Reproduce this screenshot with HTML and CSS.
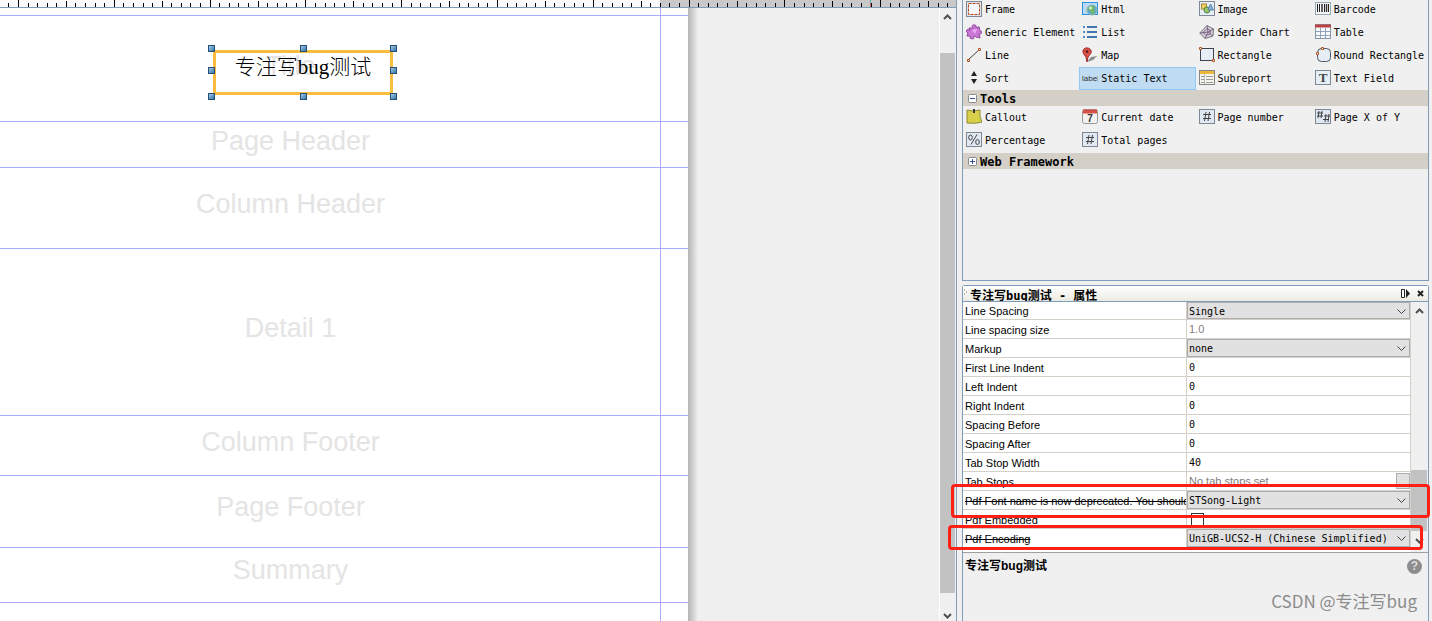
FILE: index.html
```html
<!DOCTYPE html>
<html lang="zh-CN">
<head>
<meta charset="utf-8">
<title>Report Designer</title>
<link rel="stylesheet" href="styles.css">
</head>
<body>
<main class="app">
  <section class="designer">
    <svg class="ruler" aria-hidden="true">
      <rect x="660" width="100%" height="7" fill="#c8c8c8"/>
      <g stroke="#000" shape-rendering="crispEdges">
        <line x1="8.42" x2="955" y1="5" y2="5" stroke-width="4" stroke-dasharray="1 8.58"/>
        <line x1="65.9" x2="955" y1="4" y2="4" stroke-width="6" stroke-dasharray="1 94.8"/>
        <line x1="18" x2="955" y1="3.5" y2="3.5" stroke-width="7" stroke-dasharray="1 94.8"/>
      </g>
      <rect x="870" y="0" width="1" height="3" fill="#5fb0a8"/>
      <rect x="870" y="3" width="1" height="4" fill="#d06a6a"/>
    </svg>
    <div class="workspace">
      <div class="page">
        <div class="band band-margin"></div>
        <div class="band band-title">Title
          <div class="element">
            <span class="element-text">专注写bug测试</span>
            <i class="handle top left"></i><i class="handle top center"></i><i class="handle top right"></i>
            <i class="handle middle left"></i><i class="handle middle right"></i>
            <i class="handle bottom left"></i><i class="handle bottom center"></i><i class="handle bottom right"></i>
          </div>
        </div>
        <div class="band band-page-header">Page Header</div>
        <div class="band band-column-header">Column Header</div>
        <div class="band band-detail">Detail 1</div>
        <div class="band band-column-footer">Column Footer</div>
        <div class="band band-page-footer">Page Footer</div>
        <div class="band band-summary">Summary</div>
      </div>
      <div class="shadow"></div>
      <div class="scrollbar canvas-scroll">
        <svg width="9" height="6" viewBox="0 0 9 6"><path d="M1 5 4.500 1.500 8 5" fill="none" stroke="#505050" stroke-width="2"/></svg>
        <div class="thumb"></div>
        <svg width="9" height="6" viewBox="0 0 9 6"><path d="M1 1 4.500 4.500 8 1" fill="none" stroke="#505050" stroke-width="2"/></svg>
      </div>
    </div>
  </section>

  <aside class="side">
    <section class="palette">
      <div class="items">
        <button class="item"><svg class="icon" viewBox="0 0 16 16"><rect x=".5" y=".5" width="15" height="15" fill="#dfe6ee" stroke="#7d8894"/><rect x="2.500" y="2.500" width="11" height="11" fill="#f4f6fa" stroke="#b8481c" stroke-dasharray="3 1"/></svg>Frame</button>
        <button class="item"><svg class="icon" viewBox="0 0 16 16"><rect x=".5" y="1.500" width="15" height="12" fill="#b9d9f5" stroke="#2d8fe0"/><circle cx="10" cy="9" r="5" fill="#5fa9d0" stroke="#8fb9a0"/><path d="M6 8q1-3 5-3l2 2-2 1 2 2-2 3q-2-1-2-3-2 0-3-2" fill="#74ba58"/><circle cx="8.500" cy="7" r="1.500" fill="#d8f2c8"/></svg>Html</button>
        <button class="item"><svg class="icon" viewBox="0 0 16 16"><rect x=".5" y=".5" width="15" height="14" fill="#e6eef7" stroke="#7d8894"/><rect x="2.500" y="3" width="5" height="5" fill="#f2cf60" stroke="#a6882d"/><circle cx="8" cy="9" r="3" fill="#9cc56c" stroke="#4d8443"/><path d="m11.500 3 3 6H9z" fill="#8cb5da" stroke="#5b82aa"/></svg>Image</button>
        <button class="item"><svg class="icon" viewBox="0 0 16 16"><rect x=".5" y="1.500" width="15" height="12" fill="#f5f7f8" stroke="#94aab0"/><path d="M2.500 3v8M4.500 3v8M9.500 3v8M13.500 3v8" stroke="#222"/><path d="M7 3v8M11.500 3v8" stroke="#333" stroke-width="1.500"/></svg>Barcode</button>
        <button class="item"><svg class="icon" viewBox="0 0 16 16"><path d="M7 4Q5 1 8 .800q3 0 2 3l3-1 1 4q2 0 1.500 2T13 10l1 4-4-1q-1-2-2-.5.500 2.500-2 2.500t-2-3L1 12l1-3Q-.5 8 .800 6T4 7L3 4z" fill="#cb78d7" stroke="#8f4b9c"/><path d="m6 6 5-1-2 5z" fill="#e7adee"/></svg>Generic Element</button>
        <button class="item"><svg class="icon" viewBox="0 0 16 16"><path d="M5 3h10M5 8h10M5 13h10" stroke="#3f78ae" stroke-width="2"/><path d="M1 3h2M1 8h2M1 13h2" stroke="#4a8fd0" stroke-width="2"/></svg>List</button>
        <button class="item"><svg class="icon" viewBox="0 0 16 16"><path d="M8 1.500 14.500 5 14 12 6 14.500.8 9z" fill="#d9cfdf" stroke="#77727c"/><path d="M8 1.500 9 8l5.500-3M9 8l5 4M9 8l-3 6.500M9 8 .8 9M8 4.500 11.500 6.500 11 10 7 11.500 4 8.500z" fill="none" stroke="#7a6682"/></svg>Spider Chart</button>
        <button class="item"><svg class="icon" viewBox="0 0 16 16"><rect x=".5" y=".5" width="15" height="14" fill="#f7f9fb" stroke="#8796a5"/><path d="M1 7.500h14M1 11.500h14M5.500 4v10M10.500 4v10" stroke="#91a5b9"/><path d="M0 2h16" stroke="#ba4242" stroke-width="3"/></svg>Table</button>
        <button class="item"><svg class="icon" viewBox="0 0 16 16"><path d="M3 12 13 3" stroke="#444"/><path d="M1.500 12.500h2v2h-2zM12.500 1.500h2v2h-2z" fill="#fff" stroke="#b6511d"/></svg>Line</button>
        <button class="item"><svg class="icon" viewBox="0 0 16 16"><path d="m5 15 4-5 6-1-4 4z" fill="#8b8b8b"/><path d="M5 15 4 10Q0 6 1 3q2-3 5-2 4 1 3 5L6 10z" fill="#df5148" stroke="#9c302c"/><circle cx="5" cy="4.500" r="1.500" fill="#602522"/></svg>Map</button>
        <button class="item"><svg class="icon" viewBox="0 0 16 16"><rect x="1.500" y="1.500" width="13" height="12" fill="#e7edf4" stroke="#3b4450"/><path d="M.5.500h2v2h-2zM13.500 12.500h2v2h-2z" fill="#fff" stroke="#b6511d"/></svg>Rectangle</button>
        <button class="item"><svg class="icon" viewBox="0 0 16 16"><rect x="2.500" y="1.500" width="13" height="13" rx="4" fill="#e7edf4" stroke="#4b5460"/><path d="M6.500.5h2v2h-2zM1.500 5.500h2v2h-2z" fill="#fff" stroke="#b6511d"/></svg>Round Rectangle</button>
        <button class="item"><svg class="icon" viewBox="0 0 16 16"><path d="M8 1 11 6H5zM8 14l3-5H5z" fill="#222"/></svg>Sort</button>
        <button class="item selected"><svg class="icon" viewBox="0 0 16 16"><text x="0" y="11" class="icon-label">label</text></svg>Static Text</button>
        <button class="item"><svg class="icon" viewBox="0 0 16 16"><rect x=".5" y=".5" width="15" height="14" fill="#f5f4ed" stroke="#868686"/><path d="M1 2.500h14" stroke="#eab93c" stroke-width="3"/><path d="M2 6.500h3M2 9.500h3M2 12.500h3M7 6.500h7M7 9.500h7M7 12.500h7" stroke="#989898"/><path d="M5.500 4v10" stroke="#b8b8b8"/></svg>Subreport</button>
        <button class="item"><svg class="icon" viewBox="0 0 16 16"><rect x=".5" y=".5" width="15" height="14" fill="#e6eef6" stroke="#7d8894"/><text x="8" y="12" class="icon-serif">T</text></svg>Text Field</button>
      </div>
      <button class="group"><svg width="9" height="9" viewBox="0 0 9 9"><rect x=".5" y=".5" width="8" height="8" rx="1" fill="#fff" stroke="#8a8a8a"/><path d="M2 4.500h5" stroke="#3b4fa0"/></svg>Tools</button>
      <div class="items">
        <button class="item"><svg class="icon" viewBox="0 0 16 16"><path d="M1 1q6 2 13 0-1 7 2 12-6 2-15 1z" fill="#d8d04a" stroke="#8f8b35"/><path d="M8 0v4" stroke="#333" stroke-width="2"/></svg>Callout</button>
        <button class="item"><svg class="icon" viewBox="0 0 16 16"><rect x=".5" y=".5" width="15" height="14" rx="2" fill="#f2f2f2" stroke="#999"/><path d="M1 2.500h14" stroke="#d6504b" stroke-width="4"/><text x="8" y="13" class="icon-num">7</text></svg>Current date</button>
        <button class="item"><svg class="icon" viewBox="0 0 16 16"><rect x=".5" y=".5" width="15" height="14" fill="#e0e9f2" stroke="#7d8894"/><path d="M7 3 5.500 12M10.500 3 9 12M4 5.500h8M4 9.500h8" fill="none" stroke="#444"/></svg>Page number</button>
        <button class="item"><svg class="icon" viewBox="0 0 16 16"><rect x=".5" y=".5" width="15" height="14" fill="#e0e9f2" stroke="#7d8894"/><path d="M4 2 3 9M7 2 6 9M2 4h6M2 7h6M11 5l-1 8M14 5l-1 8M9 7h6M8 10.500h6" stroke="#444"/></svg>Page X of Y</button>
        <button class="item"><svg class="icon" viewBox="0 0 16 16"><rect x=".5" y=".5" width="15" height="14" fill="#e0e9f2" stroke="#7d8894"/><path d="M11 2.500 5 12.500" stroke="#444"/><ellipse cx="4.500" cy="5.500" rx="1.800" ry="2.500" fill="none" stroke="#444"/><ellipse cx="11.500" cy="10" rx="1.800" ry="2.500" fill="none" stroke="#444"/></svg>Percentage</button>
        <button class="item"><svg class="icon" viewBox="0 0 16 16"><rect x=".5" y=".5" width="15" height="14" fill="#e0e9f2" stroke="#7d8894"/><path d="M7 3 5.500 12M10.500 3 9 12M4 5.500h8M4 9.500h8" fill="none" stroke="#444"/></svg>Total pages</button>
      </div>
      <button class="group group-closed"><svg width="9" height="9" viewBox="0 0 9 9"><rect x=".5" y=".5" width="8" height="8" rx="1" fill="#fff" stroke="#8a8a8a"/><path d="M2 4.500h5M4.500 2v5" stroke="#3b4fa0"/></svg>Web Framework</button>
    </section>

    <section class="properties">
      <header class="prop-title">
        <svg width="3" height="9" viewBox="0 0 3 9"><path d="M0 1h1M2 3h1M0 5h1" stroke="#777"/></svg>
        <h2>专注写bug测试 - 属性</h2>
        <button class="tool" aria-label="Minimize"><svg width="9" height="9" viewBox="0 0 9 9"><path d="M.5.500h3v8h-3z" fill="#fff" stroke="#222"/><path d="M5 0v9l4-4.500z" fill="#222"/></svg></button>
        <button class="tool" aria-label="Close"><svg width="7" height="7" viewBox="0 0 7 7"><path d="m1 1 5 5M6 1 1 6" stroke="#222" stroke-width="2"/></svg></button>
      </header>
      <div class="prop-body">
        <table class="grid">
          <tbody>
            <tr><th><label for="ls">Line Spacing</label></th><td><div class="pick"><select id="ls"><option>Single</option></select><svg width="9" height="5" viewBox="0 0 9 5"><path d="m.5.500 4 4 4-4" fill="none" stroke="#444"/></svg></div></td></tr>
            <tr><th>Line spacing size</th><td class="muted">1.0</td></tr>
            <tr><th><label for="mk">Markup</label></th><td><div class="pick"><select id="mk"><option>none</option></select><svg width="9" height="5" viewBox="0 0 9 5"><path d="m.5.500 4 4 4-4" fill="none" stroke="#444"/></svg></div></td></tr>
            <tr><th>First Line Indent</th><td>0</td></tr>
            <tr><th>Left Indent</th><td>0</td></tr>
            <tr><th>Right Indent</th><td>0</td></tr>
            <tr><th>Spacing Before</th><td>0</td></tr>
            <tr><th>Spacing After</th><td>0</td></tr>
            <tr><th>Tab Stop Width</th><td>40</td></tr>
            <tr><th>Tab Stops</th><td class="muted"><div class="with-button">No tab stops set<button class="more" aria-label="Edit tab stops"></button></div></td></tr>
            <tr><th class="old"><label for="pf">Pdf Font name is now deprecated. You should</label></th><td><div class="pick"><select id="pf"><option>STSong-Light</option></select><svg width="9" height="5" viewBox="0 0 9 5"><path d="m.5.500 4 4 4-4" fill="none" stroke="#444"/></svg></div></td></tr>
            <tr><th><label for="pe">Pdf Embedded</label></th><td><input class="check" type="checkbox" id="pe"></td></tr>
            <tr><th class="old"><label for="pc">Pdf Encoding</label></th><td><div class="pick"><select id="pc"><option>UniGB-UCS2-H (Chinese Simplified)</option></select><svg width="9" height="5" viewBox="0 0 9 5"><path d="m.5.500 4 4 4-4" fill="none" stroke="#444"/></svg></div></td></tr>
          </tbody>
        </table>
        <div class="scrollbar prop-scroll">
          <svg width="9" height="6" viewBox="0 0 9 6"><path d="M1 5 4.500 1.500 8 5" fill="none" stroke="#505050" stroke-width="2"/></svg>
          <div class="thumb"></div>
          <svg width="9" height="6" viewBox="0 0 9 6"><path d="M1 1 4.500 4.500 8 1" fill="none" stroke="#505050" stroke-width="2"/></svg>
        </div>
        <div class="mark mark-font"></div>
        <div class="mark mark-encoding"></div>
      </div>
      <footer class="description">
        <div class="desc-head"><strong>专注写bug测试</strong><button class="help" aria-label="Help">?</button></div>
        <p class="credit">CSDN @专注写bug</p>
      </footer>
    </section>
  </aside>
</main>
</body>
</html>
```
FILE: styles.css
```css
* { box-sizing: border-box; }

body {
  margin: 0;
  background: #f0f0f0;
  color: #000;
  font: 11px/16px "Liberation Sans", "Noto Sans CJK SC", sans-serif;
}

button {
  margin: 0;
  padding: 0;
  border: 0;
  background: none;
  color: inherit;
  font: inherit;
}

svg { display: block; flex: none; }

.app {
  display: grid;
  grid-template-columns: minmax(0, 1fr) 475px;
  height: 100vh;
  overflow: hidden;
}

/* Report canvas */
.designer {
  display: flex;
  flex-direction: column;
  min-width: 0;
  border-right: 1px solid #7f9db9;
}

.ruler {
  width: 100%;
  height: 8px;
  background: #fbfbfb;
  border-bottom: 1px solid #7f9db9;
}

.workspace {
  display: flex;
  flex: 1;
  min-height: 0;
  background: #efefef;
}

.page {
  flex: none;
  width: 688px;
  overflow: hidden;
  background: linear-gradient(#aaaaff, #aaaaff) 660px 0 / 1px 100% no-repeat #fff;
}

.band {
  position: relative;
  display: flex;
  align-items: center;
  justify-content: center;
  padding-right: 107px;
  border-bottom: 1px solid #aaaaff;
  color: #e4e4e4;
  font-size: 27px;
  line-height: 32px;
}

.band-margin { height: 8px; }
.band-title { height: 106px; align-items: flex-start; padding-top: 34px; }
.band-page-header { height: 46px; padding-bottom: 8px; }
.band-column-header { height: 81px; padding-bottom: 8px; }
.band-detail { height: 167px; padding-bottom: 8px; }
.band-column-footer { height: 60px; padding-bottom: 8px; }
.band-page-footer { height: 72px; padding-bottom: 10px; }
.band-summary { height: 55px; padding-bottom: 10px; }

.element {
  position: absolute;
  left: 213px;
  top: 34px;
  width: 180px;
  height: 45px;
  border: 3px solid #fbbd40;
  text-align: center;
}

.element-text {
  display: block;
  color: #000;
  font: 300 21px/28px "Liberation Serif", "Noto Sans CJK SC", serif;
}

.handle {
  position: absolute;
  width: 7px;
  height: 7px;
  border: 1px solid #235078;
  background: linear-gradient(135deg, #a8c8e4, #3674a6);
}

.handle.top { top: -8px; }
.handle.middle { top: 14px; }
.handle.bottom { bottom: -8px; }
.handle.left { left: -8px; }
.handle.center { left: 84px; }
.handle.right { right: -7px; }

.shadow {
  flex: 1;
  background: linear-gradient(90deg, #b4b4b4, #efefef 10px);
}

.scrollbar {
  display: flex;
  flex: none;
  flex-direction: column;
  align-items: center;
  background: #f0f0f0;
}

.thumb { width: 100%; background: #c2c2c2; }

.canvas-scroll {
  width: 17px;
  padding: 6px 1px 2px 0;
  border-left: 1px solid #fff;
}

.canvas-scroll .thumb { flex: 1; margin: 33px 0 20px; }

/* Palette */
.side {
  display: flex;
  flex-direction: column;
  gap: 4px;
  padding: 0 3px 0 5px;
}

.palette {
  height: 281px;
  overflow: hidden;
  border: 1px solid #7f9db9;
  border-top: 0;
}

.items {
  display: grid;
  grid-template-columns: repeat(4, minmax(0, 1fr));
  font: 10px/22px "DejaVu Sans Mono", monospace;
}

.palette .items:first-child { margin-top: -2px; }

.item {
  display: flex;
  align-items: center;
  gap: 3px;
  height: 23px;
  padding-left: 3px;
  white-space: nowrap;
}

.item.selected {
  padding-left: 2px;
  background: #c0dcf3;
  border: 1px solid #90c8f6;
}

.icon { width: 16px; height: 16px; margin-bottom: 2px; }
.icon-label { font: 8px "Liberation Sans", sans-serif; fill: #333; }
.icon-serif { font: bold 13px "Liberation Serif", serif; text-anchor: middle; fill: #444; }
.icon-num { font: bold 10px "Liberation Sans", sans-serif; text-anchor: middle; fill: #333; }

.group {
  display: flex;
  align-items: center;
  gap: 3px;
  width: 100%;
  height: 16px;
  padding: 1px 0 0 5px;
  background: #d4d0c8;
  font: bold 12px/16px "DejaVu Sans Mono", monospace;
}

.group-closed { margin-top: 1px; }

/* Properties */
.properties {
  display: flex;
  flex: 1;
  flex-direction: column;
  min-height: 0;
  border: 1px solid #7f9db9;
  border-bottom: 0;
  border-radius: 3px 3px 0 0;
}

.prop-title {
  display: flex;
  align-items: center;
  gap: 3px;
  height: 16px;
  padding: 0 2px 0 1px;
  overflow: hidden;
  border-bottom: 1px solid #7f9db9;
  background: linear-gradient(#fff, #ecebe2);
}

.prop-title h2 {
  flex: 1;
  margin: 0;
  padding-top: 4px;
  font: bold 12px/16px "DejaVu Sans Mono", "Noto Sans CJK SC", monospace;
}

.tool { display: grid; place-items: center; width: 12px; height: 12px; }

.prop-body {
  position: relative;
  display: flex;
  height: 251px;
  border-bottom: 1px solid #a0a0a0;
  background: #fff;
}

.grid {
  flex: 1;
  width: 100%;
  height: 246px;
  min-width: 0;
  table-layout: fixed;
  border-collapse: separate;
  border-spacing: 0;
}

.grid tr { height: 19px; }
.grid tr:first-child { height: 18px; }

.grid th,
.grid td {
  height: inherit;
  padding: 1px 0 0 2px;
  overflow: hidden;
  border-right: 1px solid #d4d0c8;
  border-bottom: 1px solid #d4d0c8;
  font-weight: 400;
  line-height: 16px;
  text-align: left;
  white-space: nowrap;
}

.grid td { font-family: "DejaVu Sans Mono", monospace; font-size: 10px; }
.grid td.muted { padding-top: 0; color: #808080; font-family: "Liberation Sans", sans-serif; font-size: 11px; }
.grid .old { text-decoration: line-through; }
.grid td:has(.pick) { padding: 0; }

.pick { position: relative; }
.pick svg { position: absolute; right: 4px; top: 7px; }

.pick select {
  display: block;
  width: 100%;
  height: 18px;
  padding: 1px 2px 0 1px;
  appearance: none;
  border: 1px solid #adadad;
  border-radius: 0;
  background: #e1e1e1;
  color: #000;
  font: 10px/15px "DejaVu Sans Mono", monospace;
}

.grid tr:first-child select { height: 17px; }

.with-button { display: flex; align-items: center; justify-content: space-between; }
.more { width: 14px; height: 16px; border: 1px solid #adadad; background: #e1e1e1; }

.check {
  display: block;
  width: 13px;
  height: 13px;
  margin: 2px;
  appearance: none;
  border: 1px solid #333;
  background: #fff;
}

.prop-scroll { width: 17px; padding: 6px 1px 8px 0; }
.prop-scroll .thumb { height: 61px; margin: auto 0 7px; }

.mark {
  position: absolute;
  border: 3px solid #ff2015;
  border-radius: 4px;
}

.mark-font { left: -12px; right: -2px; top: 182px; height: 34px; }
.mark-encoding { left: -15px; right: 5px; top: 223px; height: 25px; }

.description {
  display: flex;
  flex: 1;
  flex-direction: column;
  justify-content: space-between;
  padding: 5px 6px 8px 2px;
}

.desc-head { display: flex; align-items: center; justify-content: space-between; font-size: 12px; }

.help {
  width: 15px;
  height: 15px;
  border-radius: 50%;
  background: #8d8d8d;
  color: #dcdcdc;
  font: bold 12px/15px "Liberation Sans", sans-serif;
}

.credit {
  margin: 0 5px 0 0;
  color: #8c8c8c;
  font: 17px/24px "Noto Sans CJK SC", sans-serif;
  text-align: right;
}
```
